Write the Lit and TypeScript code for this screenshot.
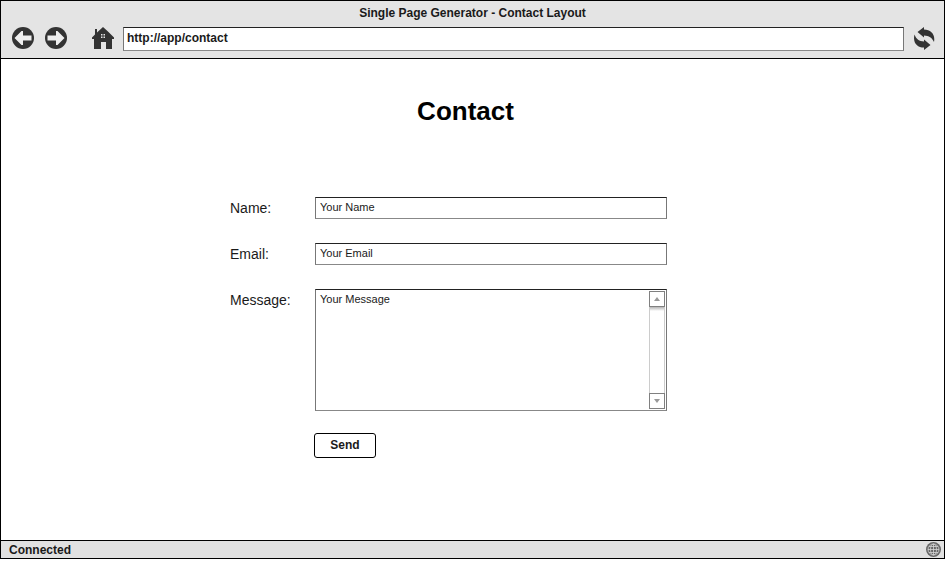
import { LitElement, html, css } from "lit";
import { customElement, query } from "lit/decorators.js";

@customElement("app-root")
export class AppRoot extends LitElement {
  static styles = css`
    :host {
      display: block;
      background: #fff;
      color: #1a1a1a;
      font-family: "Liberation Sans", Arial, sans-serif;
      font-size: 12px;
    }
    * {
      box-sizing: border-box;
    }
    button,
    input,
    textarea {
      font-family: inherit;
      margin: 0;
      color: inherit;
    }
    .window {
      display: flex;
      flex-direction: column;
      min-height: calc(100vh - 3px);
      margin-right: 3px;
      border: 1px solid #000;
    }
    .chrome {
      background: #e4e4e4;
      border-bottom: 1px solid #000;
      padding-bottom: 7px;
    }
    .title {
      margin: 0;
      padding-top: 4px;
      height: 26px;
      font-size: 12px;
      line-height: 16px;
      font-weight: bold;
      text-align: center;
    }
    .bar {
      display: flex;
      align-items: flex-start;
      padding: 0 9px 0 11px;
    }
    .icon-button {
      display: flex;
      flex: none;
      padding: 0;
      border: 0;
      background: none;
      margin-right: 11px;
    }
    .home {
      margin: 0 9px 0 13px;
    }
    .refresh {
      margin: 0 0 0 10px;
    }
    .field {
      border: 1px solid #777;
      border-top-color: #222;
      border-bottom-color: #888;
      border-radius: 0;
      background: #fff;
      outline-offset: 0;
    }
    .address {
      flex: 1;
      min-width: 0;
      height: 24px;
      padding: 0 3px 2px;
      font-size: 12px;
      font-weight: bold;
    }
    .page {
      flex: 1;
      padding: 36px 0;
    }
    .heading {
      margin: 0 0 70px;
      padding-right: 14px;
      color: #000;
      font-size: 26px;
      line-height: 32px;
      font-weight: bold;
      text-align: center;
    }
    .form {
      display: grid;
      grid-template-columns: 85px 1fr;
      row-gap: 24px;
      max-width: 485px;
      margin: 0 auto;
      padding-right: 48px;
    }
    .label {
      font-size: 14px;
      line-height: 22px;
    }
    .text {
      width: 100%;
      height: 22px;
      padding: 0 4px 2px;
      font-size: 11px;
    }
    .area {
      display: flex;
      height: 122px;
      padding: 1px;
    }
    .message {
      flex: 1;
      min-width: 0;
      border: 0;
      padding: 1px 3px;
      outline: 0;
      resize: none;
      overflow: hidden;
      font-size: 11px;
      line-height: 14px;
    }
    .scroller {
      display: flex;
      flex-direction: column;
      width: 16px;
    }
    .arrow {
      display: flex;
      align-items: center;
      justify-content: center;
      width: 16px;
      height: 16px;
      padding: 0;
      border: 1px solid #808080;
      background: #fff;
    }
    .track {
      flex: 1;
      border: solid #ccc;
      border-width: 0 1px;
      background: linear-gradient(#b5b5b5, #fff 4px);
    }
    .send {
      grid-column: 2;
      justify-self: start;
      width: 62px;
      height: 25px;
      margin: -2px 0 0 -1px;
      padding: 0 0 1px;
      border: 1px solid #000;
      border-radius: 3px;
      background: #fff;
      font-size: 12px;
      font-weight: bold;
    }
    .status {
      display: flex;
      align-items: center;
      justify-content: space-between;
      height: 18px;
      padding: 0 3px 0 8px;
      border-top: 1px solid #000;
      background: #e1e1e1;
      font-weight: bold;
    }
  `;

  @query(".message") private message!: HTMLTextAreaElement;

  private scrollMessage(lines: number) {
    this.message.scrollBy({ top: lines * 14 });
  }

  render() {
    return html`
      <div class="window">
        <header class="chrome">
          <p class="title">Single Page Generator - Contact Layout</p>
          <nav class="bar" aria-label="Browser">
            <button class="icon-button" type="button" aria-label="Back">
              <svg width="22" height="22" viewBox="0 0 22 22">
                <circle cx="11" cy="11" r="11" fill="#333" />
                <path fill="#eee" d="M2.5 11L9.5 4H11V8.500H19.500V13.500H11V18H9.500z" />
              </svg>
            </button>
            <button class="icon-button" type="button" aria-label="Forward">
              <svg width="22" height="22" viewBox="0 0 22 22">
                <circle cx="11" cy="11" r="11" fill="#333" />
                <path fill="#eee" d="M19.500 11L12.500 4H11V8.500H2.500V13.500H11V18H12.500z" />
              </svg>
            </button>
            <button class="icon-button home" type="button" aria-label="Home">
              <svg width="23" height="22" viewBox="0 0 23 22">
                <path fill="#333"
                  d="M12 0L17.500 5L23 10.500V12H21V22H15V15H10V22H3V12H1V10.500L4 7.500V2H6V5.500z" />
                <path fill="#e4e4e4" d="M10 7h1.500v1.500H10zM12.500 7h1.500v1.500h-1.500zM10 9.500h1.500v1.500H10zM12.500 9.500h1.500v1.500h-1.500z" />
              </svg>
            </button>
            <input class="field address" type="text" aria-label="Address" value="http://app/contact" />
            <button class="icon-button refresh" type="button" aria-label="Reload">
              <svg width="21" height="24" viewBox="0 0 21 24">
                <g fill="#333">
                  <path d="M3.500 5L10 0V2.500C17 2.500 21.500 7.500 20 15C18 10.500 15 9 10 8.500V10.500z" />
                  <path d="M16.500 18L10 23V20.500C3 20.500 -1.500 15.500 0.500 7.500C2.500 12.500 5 14 10 14.500V12.500z" />
                </g>
              </svg>
            </button>
          </nav>
        </header>

        <main class="page">
          <h1 class="heading">Contact</h1>
          <form class="form" @submit=${(e: Event) => e.preventDefault()}>
            <label class="label" for="name">Name:</label>
            <input class="field text" id="name" type="text" value="Your Name" />
            <label class="label" for="email">Email:</label>
            <input class="field text" id="email" type="text" value="Your Email" />
            <label class="label" for="message">Message:</label>
            <div class="field area">
              <textarea class="message" id="message" .value=${"Your Message"}></textarea>
              <div class="scroller">
                <button class="arrow" type="button" aria-label="Scroll up" @click=${() => this.scrollMessage(-1)}>
                  <svg width="6" height="4" viewBox="0 0 6 4"><path fill="#999" d="M3 0L6 4H0z" /></svg>
                </button>
                <div class="track"></div>
                <button class="arrow" type="button" aria-label="Scroll down" @click=${() => this.scrollMessage(1)}>
                  <svg width="6" height="4" viewBox="0 0 6 4"><path fill="#999" d="M3 4L0 0H6z" /></svg>
                </button>
              </div>
            </div>
            <button class="send" type="submit">Send</button>
          </form>
        </main>

        <footer class="status">
          <span>Connected</span>
          <svg width="15" height="15" viewBox="0 0 15 15" aria-hidden="true">
            <circle cx="7.500" cy="7.500" r="7.500" fill="#666" />
            <g fill="none" stroke="#d4d4d4" stroke-width="0.800">
              <path d="M7.500 2V13M2 7.500H13M3 4.500H12M3 10.500H12" />
              <ellipse cx="7.500" cy="7.500" rx="3" ry="5.500" />
              <circle cx="7.500" cy="7.500" r="5.500" />
            </g>
          </svg>
        </footer>
      </div>
    `;
  }
}
